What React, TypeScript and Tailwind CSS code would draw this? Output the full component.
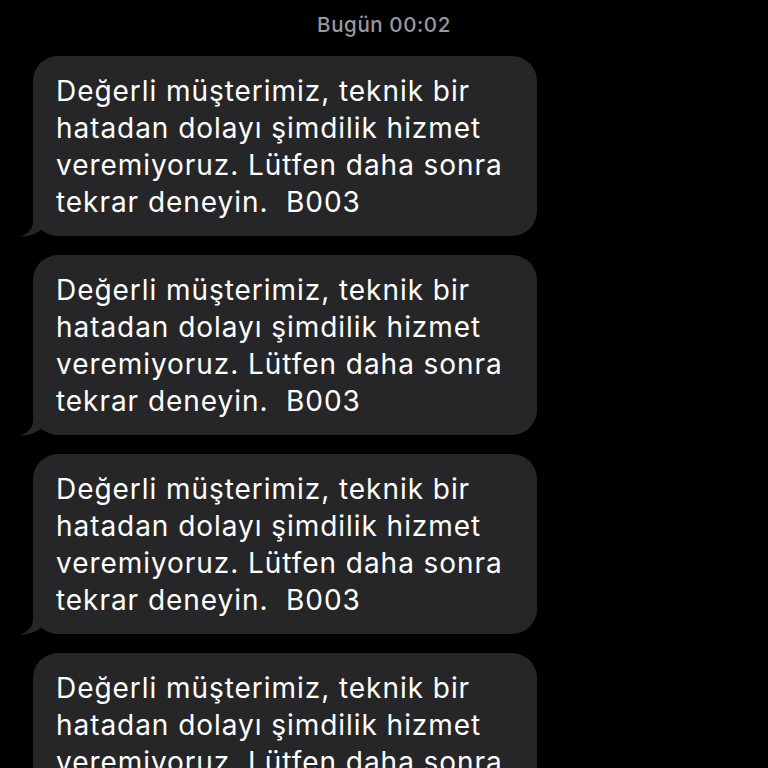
import React from 'react';

const MESSAGE = 'Değerli müşterimiz, teknik bir hatadan dolayı şimdilik hizmet veremiyoruz. Lütfen daha sonra tekrar deneyin.\u00a0 B003';

const Tail = () => (
  <svg
    className="absolute bottom-[-1px] left-[-13px]"
    width="48"
    height="24"
    viewBox="0 0 48 24"
    fill="#262628"
  >
    <path d="M13 0 L13 8 C13 16 8 21 0 23.5 C8 24 16 21 23 15.5 C27 19.5 32 23 40 23 L48 23 L48 0 Z" />
  </svg>
);

const Bubble = ({ text }: { text: string }) => (
  <div className="relative w-[504px]">
    <div className="relative z-10 rounded-[25px] bg-[#262628] pl-[23px] pr-[18px] pt-[17px] pb-[15px] text-[28px] leading-[37px] tracking-[0.95px] text-white">
      {text}
    </div>
    <Tail />
  </div>
);

export default function App() {
  return (
    <div
      className="h-screen overflow-hidden bg-black"
      style={{ fontFamily: 'Inter, "Noto Sans", sans-serif' }}
    >
      <div className="pt-[13px] text-center text-[20.5px] leading-[24px] font-medium tracking-[0.6px] text-[#98989d]">
        Bugün 00:02
      </div>
      <div className="flex flex-col gap-[19px] pl-[33px] pt-[19px]">
        {[0, 1, 2, 3].map((i) => (
          <Bubble key={i} text={MESSAGE} />
        ))}
      </div>
    </div>
  );
}
